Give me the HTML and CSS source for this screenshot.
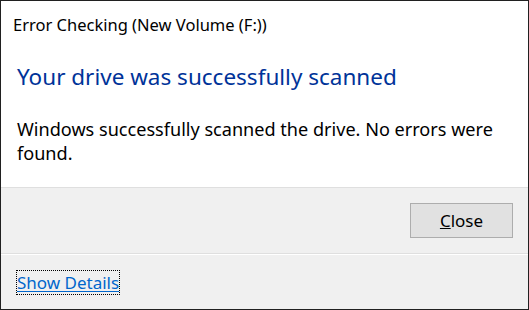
FILE: index.html
```html
<!DOCTYPE html>
<html lang="en">
<head>
<meta charset="utf-8">
<title>Error Checking</title>
<link rel="stylesheet" href="styles.css">
</head>
<body>
<div class="window">
  <div class="panel">
    <div class="title">Error Checking (New Volume (F:))</div>
    <div class="content">
      <h1 class="heading">Your drive was successfully scanned</h1>
      <p class="message">Windows successfully scanned the drive. No errors were found.</p>
    </div>
  </div>
  <div class="actions">
    <button class="btn" type="button"><span class="accel">C</span>lose</button>
  </div>
  <div class="footer">
    <a class="details" href="#">Show Details</a>
  </div>
</div>
</body>
</html>
```

FILE: styles.css
```css
html, body {
  margin: 0;
  padding: 0;
  background: #202020;
}
body {
  width: 529px;
  height: 310px;
  font-family: "Noto Sans", "Open Sans", sans-serif;
  font-size: 17px;
  color: #000;
}
.window {
  margin: 1px 1px 0 1px;
  width: 527px;
  height: 308px;
  display: flex;
  flex-direction: column;
  background: #f0f0f0;
}
.panel {
  background: #fff;
  border-bottom: 1px solid #dfdfdf;
  height: 186px;
}
.title {
  padding: 14px 0 0 12px;
  font-size: 16.5px;
  line-height: 20px;
}
.content {
  padding: 28px 16px 0 16px;
}
.heading {
  margin: 0;
  font-size: 22.5px;
  font-weight: normal;
  line-height: 28px;
  color: #003399;
}
.message {
  margin: 26px 0 0 0;
  font-size: 18.1px;
  line-height: 24px;
  width: 500px;
}
.actions {
  display: flex;
  justify-content: flex-end;
  padding: 15px;
  border-bottom: 1px solid #dfdfdf;
  box-shadow: 0 1px 0 #fff;
}
.btn {
  width: 103px;
  height: 35px;
  box-sizing: border-box;
  border: 1px solid #adadad;
  background: #e1e1e1;
  font: inherit;
  font-size: 17px;
  color: #000;
  padding: 0;
  line-height: 33px;
}
.accel {
  text-decoration: underline;
}
.footer {
  margin-top: 1px;
  padding: 16px 16px 0 16px;
}
.details {
  display: inline-block;
  color: #0066cc;
  font-size: 17px;
  line-height: 23px;
  outline: 1px dotted #000;
  outline-offset: 0;
  text-decoration: underline;
  text-underline-offset: 2px;
}
```
